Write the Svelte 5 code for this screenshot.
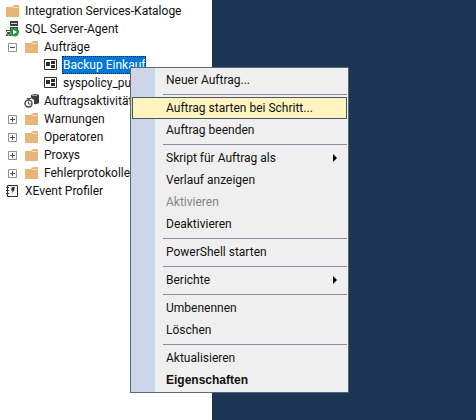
<script>
	const tree = [
		{ label: 'Integration Services-Kataloge', icon: 'folder', level: 0 },
		{ label: 'SQL Server-Agent', icon: 'agent', level: 0 },
		{ label: 'Aufträge', icon: 'folder', level: 1, expander: 'minus' },
		{ label: 'Backup Einkauf', icon: 'job', level: 2 },
		{ label: 'syspolicy_pu', icon: 'job', level: 2 },
		{ label: 'Auftragsaktivität', icon: 'monitor', level: 1 },
		{ label: 'Warnungen', icon: 'folder', level: 1, expander: 'plus' },
		{ label: 'Operatoren', icon: 'folder', level: 1, expander: 'plus' },
		{ label: 'Proxys', icon: 'folder', level: 1, expander: 'plus' },
		{ label: 'Fehlerprotokolle', icon: 'folder', level: 1, expander: 'plus' },
		{ label: 'XEvent Profiler', icon: 'xevent', level: 0 }
	];

	// one inner array per block between separators
	const groups = [
		[{ label: 'Neuer Auftrag...' }],
		[{ label: 'Auftrag starten bei Schritt...' }, { label: 'Auftrag beenden' }],
		[
			{ label: 'Skript für Auftrag als', submenu: true },
			{ label: 'Verlauf anzeigen' },
			{ label: 'Aktivieren', disabled: true },
			{ label: 'Deaktivieren' }
		],
		[{ label: 'PowerShell starten' }],
		[{ label: 'Berichte', submenu: true }],
		[{ label: 'Umbenennen' }, { label: 'Löschen' }],
		[{ label: 'Aktualisieren' }, { label: 'Eigenschaften', strong: true }]
	];

	let selected = $state('Backup Einkauf');
	let active = $state('Auftrag starten bei Schritt...');
</script>

{#snippet icon(name)}
	<svg class="icon" width="15" height="16" viewBox="0 0 15 16" aria-hidden="true">
		{#if name === 'folder'}
			<path d="M1 4h6l2-2h5v12H1z" fill="#e8b577" />
			<path d="M8 4.500h5" stroke="#f8e3c6" />
		{:else if name === 'agent'}
			<path d="M5 0h8v5H5zM5 6h8v4H5z" fill="#3c3c3c" />
			<path d="M6 2.500h6M6 8h4" stroke="#d5d5d5" />
			<path d="M1 9h5v1L4.500 12 6 14v1H1v-1l1.500-2L1 10z" fill="#3c3c3c" />
			<path d="M2 10.500h3M2.500 14h2" stroke="#fff" />
			<circle cx="9.500" cy="11" r="4.500" fill="#249445" />
			<path d="M8 8.500v5l4-2.500z" fill="#fff" />
		{:else if name === 'job'}
			<path d="M1.500 2.500h12v10h-12z" fill="#fff" stroke="#303030" />
			<path d="M3 5h4v4H3zM8 4h4v3H8zM8 8h4v3H8z" fill="#2b2b2b" />
		{:else if name === 'monitor'}
			<path d="M7 2c1-1 7-1 8 0v8c-1 1-3 1.500-5 1V7L7 5z" fill="#3b3b3b" />
			<path d="M8 2.500h5" stroke="#9a9a9a" />
			<circle cx="4.500" cy="10.500" r="3.500" fill="#fff" stroke="#4a4a4a" stroke-width="1.500" />
			<path d="M4.500 8.500v2.500h2M3 5.500h4M4.500 5v2" fill="none" stroke="#4a4a4a" />
		{:else}
			<path d="M2.500 2.500h10v11h-10z" fill="#f5f5f5" stroke="#303030" />
			<path d="M1 4.500h3M1 7.500h3M1 10.500h3" stroke="#303030" />
			<path d="M7 4h3L9 6.500h1L7 10l.5-2.500H6z" fill="#303030" />
		{/if}
	</svg>
{/snippet}

<main>
	<nav class="explorer" aria-label="Objekt-Explorer">
		<ul>
			{#each tree as node (node.label)}
				<li class="row level-{node.level}">
					{#if node.level === 1}
						<span class="gutter">
							{#if node.expander}
								<button class="expander" aria-label="{node.label} {node.expander === 'plus' ? 'erweitern' : 'reduzieren'}">
									<svg width="9" height="9" viewBox="0 0 9 9">
										<path d="M.5.5h8v8h-8z" fill="#fff" stroke="#919191" />
										<path d={node.expander === 'plus' ? 'M2 4.500h5M4.500 2v5' : 'M2 4.500h5'} stroke="#3b4f93" />
									</svg>
								</button>
							{/if}
						</span>
					{/if}
					{@render icon(node.icon)}
					<button class="label" class:selected={selected === node.label} onclick={() => (selected = node.label)}>{node.label}</button>
				</li>
			{/each}
		</ul>
	</nav>

	<div class="menu" role="menu">
		{#each groups as group, i}
			{#if i > 0}
				<div class="separator" role="separator"></div>
			{/if}
			{#each group as item (item.label)}
				<button
					class="item"
					class:active={active === item.label}
					class:strong={item.strong}
					role="menuitem"
					disabled={item.disabled}
					onmouseenter={() => (active = item.label)}
				>
					<span>{item.label}</span>
					{#if item.submenu}
						<svg width="4" height="8" viewBox="0 0 4 8" aria-hidden="true"><path d="M0 0l4 4-4 4z" fill="#000" /></svg>
					{/if}
				</button>
			{/each}
		{/each}
	</div>
</main>

<style>
	:global(body) {
		background: #1b3553;
	}

	main {
		position: relative;
		display: flex;
		min-height: 100vh;
		overflow: hidden;
		font-family: 'Segoe UI', Roboto, 'Open Sans', sans-serif;
		font-size: 12px;
		line-height: 16px;
		color: #111;
	}

	button {
		margin: 0;
		padding: 0;
		border: 0;
		background: none;
		font: inherit;
		color: inherit;
		text-align: left;
	}

	.explorer {
		flex: 0 0 212px;
		overflow: hidden;
		background: #fff;
	}

	ul {
		margin: 0;
		padding: 2px 0 0;
		list-style: none;
	}

	.row {
		display: flex;
		align-items: center;
		height: 18px;
		padding-left: 5px;
		white-space: nowrap;
	}

	.level-1 {
		padding-left: 8px;
	}

	.level-2 {
		padding-left: 43px;
	}

	.gutter {
		display: flex;
		flex: 0 0 16px;
	}

	.expander {
		display: flex;
	}

	.icon {
		flex: none;
	}

	.label {
		height: 18px;
		margin-left: 4px;
		padding: 0 1px;
	}

	.selected {
		outline: 1px dotted #10253a;
		outline-offset: -1px;
		background: #0078d7;
		color: #fff;
	}

	/* Kontextmenü */
	.menu {
		position: absolute;
		top: 67px;
		left: 130px;
		box-sizing: border-box;
		width: 219px;
		padding: 1px;
		border: 1px solid #56667c;
		background: linear-gradient(to right, #cdd6e8 24px, #efefef 24px);
	}

	.item {
		display: flex;
		align-items: center;
		justify-content: space-between;
		box-sizing: border-box;
		width: 100%;
		height: 22px;
		padding: 0 9px 0 33px;
		border: 1px solid transparent;
		white-space: nowrap;
	}

	.item:disabled {
		color: #858585;
	}

	.active {
		border-color: #4c5661;
		background: #fdf4bf;
	}

	.strong {
		font-family: 'Liberation Sans', Arial, sans-serif;
		font-weight: bold;
	}

	.separator {
		height: 1px;
		margin: 3px 0 2px 31px;
		background: #858d9b;
	}
</style>
